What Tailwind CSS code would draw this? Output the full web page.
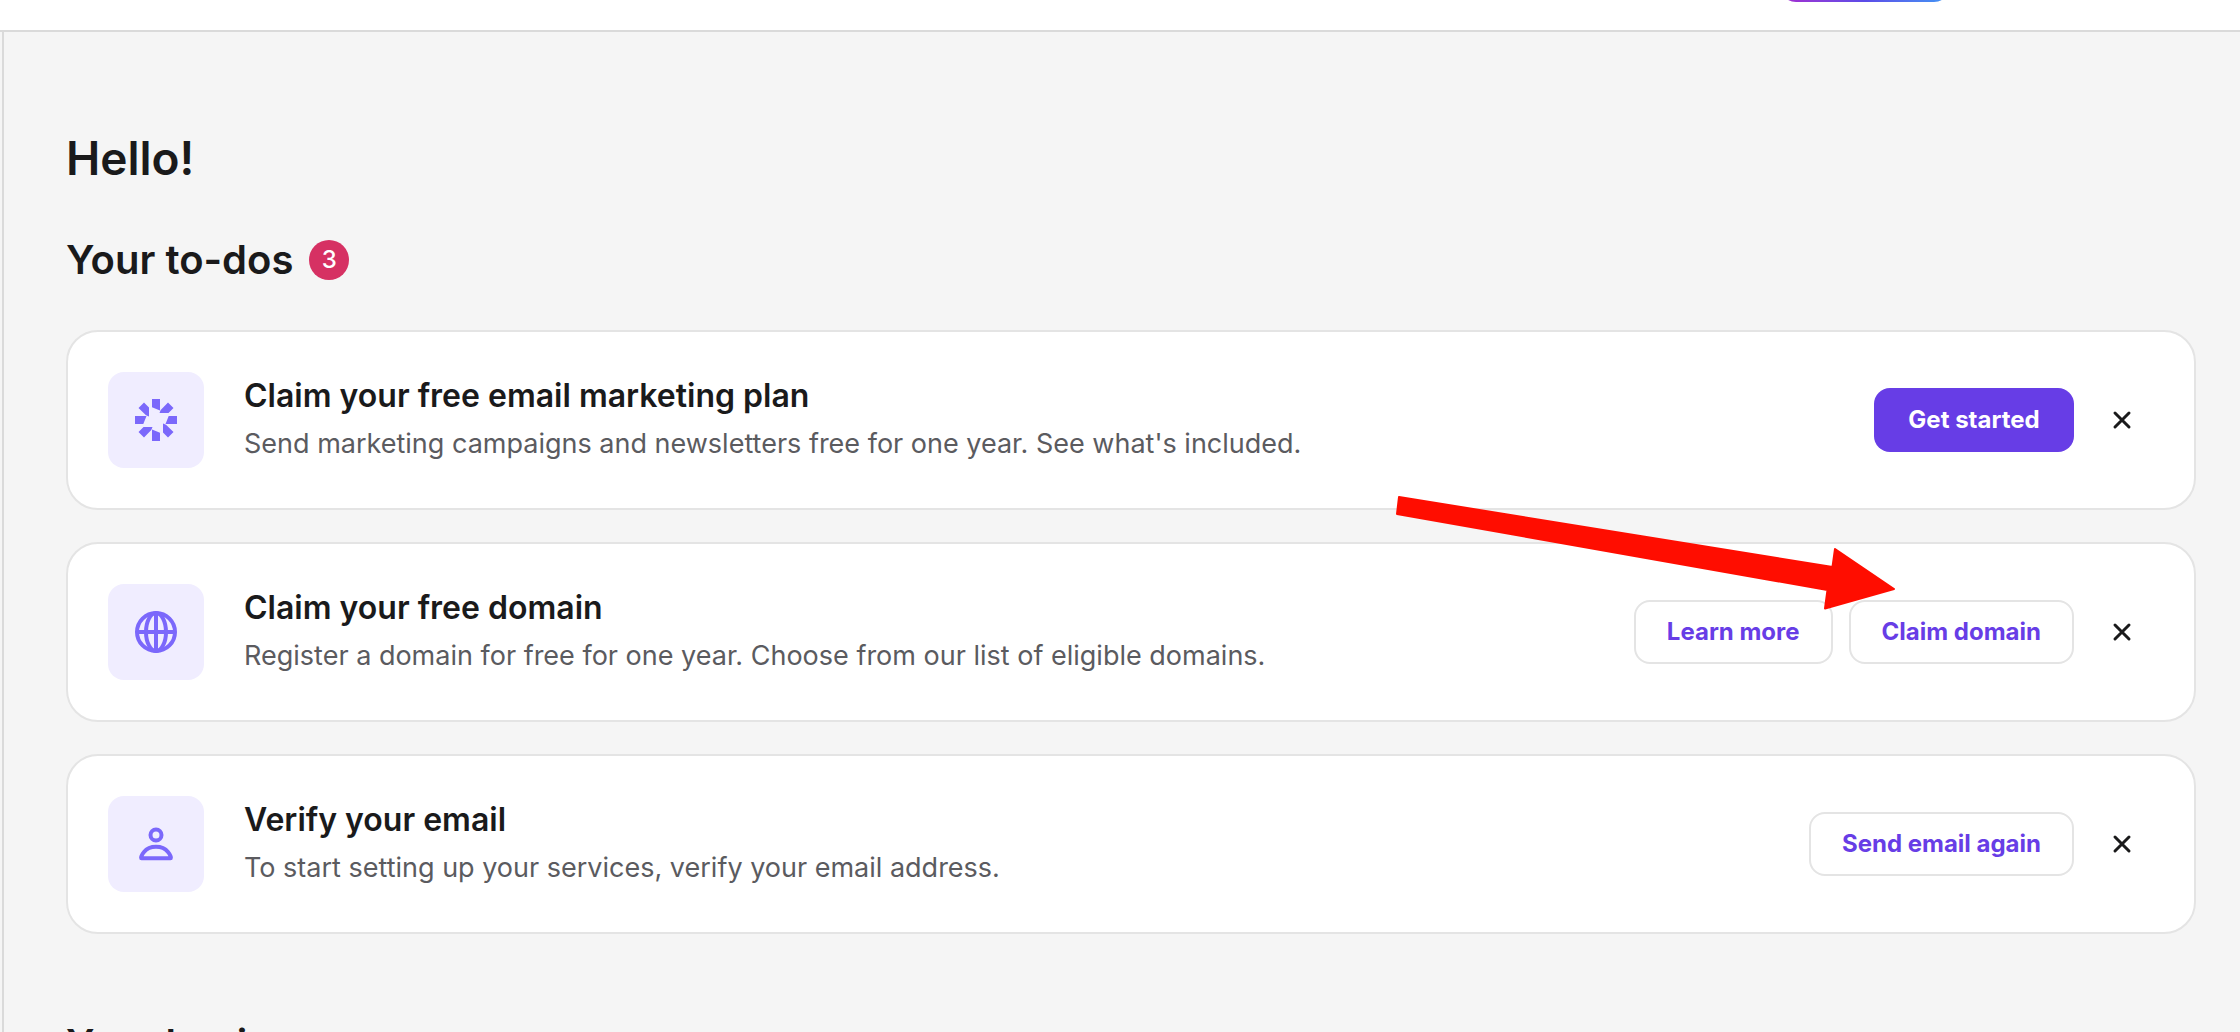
<!DOCTYPE html>
<html lang="en">
<head>
  <meta charset="UTF-8" />
  <meta name="viewport" content="width=device-width, initial-scale=1.0" />
  <title>Home</title>
  <script src="https://cdn.jsdelivr.net/npm/@tailwindcss/browser@4"></script>
</head>
<body class="h-screen overflow-hidden flex flex-col bg-[#f5f5f5] text-[#1a1a1b] font-['Inter',sans-serif]">

  <!-- Header, scrolled so that only its lower edge shows -->
  <header class="h-8 shrink-0 flex items-end justify-end overflow-hidden bg-white border-b-2 border-[#dadada] pb-7 pr-[290px]">
    <button aria-label="Assistant" class="w-[170px] h-16 shrink-0 rounded-2xl bg-linear-to-r from-[#a428cf] via-[#5a4be8] to-[#3e96f4]"></button>
  </header>

  <!-- Content -->
  <main class="relative grow ml-[2px] border-l-2 border-[#dadada] pl-[62px] pr-11 pt-24">
    <h1 class="text-[46px] leading-[60px] font-semibold">Hello!</h1>

    <section class="mt-10">
      <div class="flex items-center gap-4 h-16">
        <h2 class="text-[40px] leading-[48px] font-semibold">Your to-dos</h2>
        <span class="size-10 rounded-full bg-[#d63163] text-white text-2xl font-medium flex items-center justify-center">3</span>
      </div>

      <ul class="mt-[38px] flex flex-col gap-8">
        <li class="h-[180px] flex items-center bg-white border-2 border-[#e4e4e4] rounded-[32px] pl-10 pr-12">
          <div class="size-24 shrink-0 rounded-2xl bg-[#f0edff] flex items-center justify-center">
            <svg class="size-12 fill-[#7b68fb]" viewBox="0 0 48 48">
              <path id="ray" d="M20 3h8v11.500l-8-3.200zM36 6.500L41.500 12 36.500 17H27.500l1.200-3z" />
              <use href="#ray" transform="rotate(90 24 24)" />
              <use href="#ray" transform="rotate(180 24 24)" />
              <use href="#ray" transform="rotate(270 24 24)" />
            </svg>
          </div>
          <div class="ml-10 grow">
            <h3 class="text-[32px] leading-[48px] font-semibold">Claim your free email marketing plan</h3>
            <p class="text-[27px] leading-[48px] text-[#5b5b5f]">Send marketing campaigns and newsletters free for one year. See what's included.</p>
          </div>
          <button class="h-16 min-w-[200px] shrink-0 px-8 rounded-2xl bg-[#673de6] text-white text-2xl font-bold">Get started</button>
          <button aria-label="Dismiss" class="ml-6 size-12 shrink-0 flex items-center justify-center">
            <svg class="size-5 stroke-[#1a1a1b]" viewBox="0 0 20 20" fill="none" stroke-width="3" stroke-linecap="round"><path d="M3 3l14 14M17 3L3 17" /></svg>
          </button>
        </li>

        <li class="h-[180px] flex items-center bg-white border-2 border-[#e4e4e4] rounded-[32px] pl-10 pr-12">
          <div class="size-24 shrink-0 rounded-2xl bg-[#f0edff] flex items-center justify-center">
            <svg class="size-12 stroke-[#7b68fb]" viewBox="0 0 48 48" fill="none" stroke-width="4">
              <circle cx="24" cy="24" r="19" />
              <ellipse cx="24" cy="24" rx="10" ry="19" />
              <path d="M24 5v38M5 24h38" />
            </svg>
          </div>
          <div class="ml-10 grow">
            <h3 class="text-[32px] leading-[48px] font-semibold">Claim your free domain</h3>
            <p class="text-[27px] leading-[48px] text-[#5b5b5f]">Register a domain for free for one year. Choose from our list of eligible domains.</p>
          </div>
          <div class="flex gap-4 shrink-0">
            <button class="h-16 px-[31px] rounded-2xl border-2 border-[#e4e4e4] bg-white text-[#673de6] text-2xl font-bold">Learn more</button>
            <button class="h-16 px-[31px] rounded-2xl border-2 border-[#e4e4e4] bg-white text-[#673de6] text-2xl font-bold">Claim domain</button>
          </div>
          <button aria-label="Dismiss" class="ml-6 size-12 shrink-0 flex items-center justify-center">
            <svg class="size-5 stroke-[#1a1a1b]" viewBox="0 0 20 20" fill="none" stroke-width="3" stroke-linecap="round"><path d="M3 3l14 14M17 3L3 17" /></svg>
          </button>
        </li>

        <li class="h-[180px] flex items-center bg-white border-2 border-[#e4e4e4] rounded-[32px] pl-10 pr-12">
          <div class="size-24 shrink-0 rounded-2xl bg-[#f0edff] flex items-center justify-center">
            <svg class="size-12 stroke-[#7b68fb]" viewBox="0 0 48 48" fill="none" stroke-width="4" stroke-linejoin="round">
              <circle cx="24" cy="15" r="5.500" />
              <path d="M9.500 38.200h29c1 0 0-3.200-2.500-6.200-3-3.700-7.500-5.200-12-5.200s-9 1.500-12 5.200c-2.500 3-3.500 6.200-2.500 6.200z" />
            </svg>
          </div>
          <div class="ml-10 grow">
            <h3 class="text-[32px] leading-[48px] font-semibold">Verify your email</h3>
            <p class="text-[27px] leading-[48px] text-[#5b5b5f]">To start setting up your services, verify your email address.</p>
          </div>
          <button class="h-16 shrink-0 px-[31px] rounded-2xl border-2 border-[#e4e4e4] bg-white text-[#673de6] text-2xl font-bold">Send email again</button>
          <button aria-label="Dismiss" class="ml-6 size-12 shrink-0 flex items-center justify-center">
            <svg class="size-5 stroke-[#1a1a1b]" viewBox="0 0 20 20" fill="none" stroke-width="3" stroke-linecap="round"><path d="M3 3l14 14M17 3L3 17" /></svg>
          </button>
        </li>
      </ul>
    </section>

    <section class="mt-[86px]">
      <h2 class="text-[40px] leading-[48px] font-semibold">Your business</h2>
    </section>

    <!-- Arrow pointing at "Claim domain" -->
    <svg class="absolute right-[343px] top-[463px] w-[502px] h-[116px] pointer-events-none fill-[#ff0d00] stroke-[#ff0d00]" viewBox="1395 495 502 116" stroke-width="2" stroke-linejoin="round">
      <path d="M1399 497L1832.500 567l2.500-18L1894 589l-69 19.500 2.500-18.500L1397 514z" />
    </svg>
  </main>

</body>
</html>
